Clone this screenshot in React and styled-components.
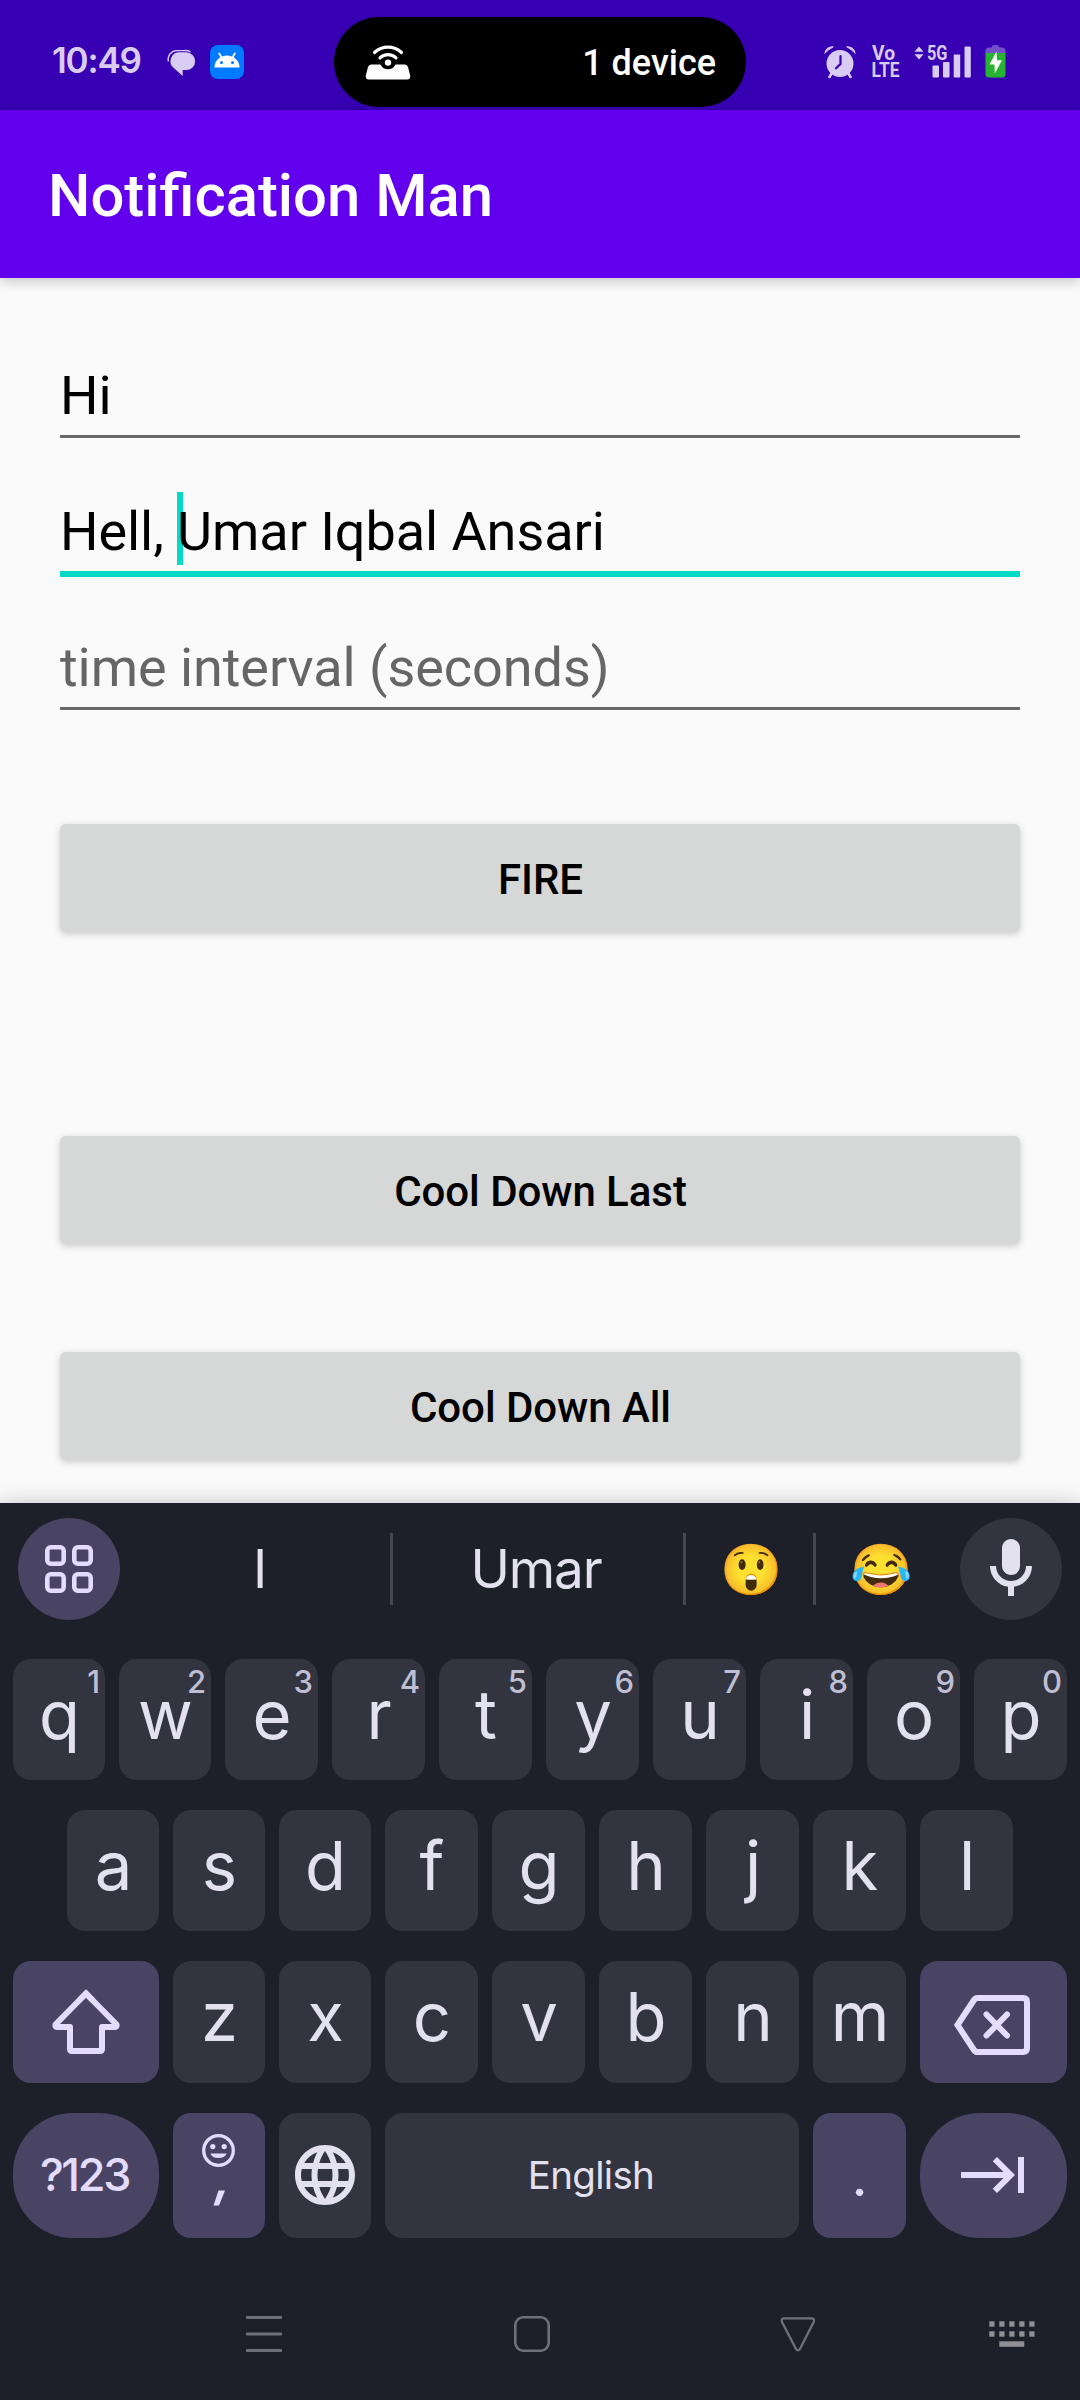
import React from 'react';
import styled, { createGlobalStyle } from 'styled-components';

const GlobalStyle = createGlobalStyle`
  *, *::before, *::after { box-sizing: border-box; }
  body { margin: 0; background: #fafafa; }
  svg { display: block; flex: none; overflow: visible; }
`;

const Screen = styled.div`
  width: 1080px;
  height: 2400px;
  display: flex;
  flex-direction: column;
  overflow: hidden;
  background: #fafafa;
  font-family: Roboto, 'Liberation Sans', sans-serif;
`;

/* ---------- status bar ---------- */

const StatusBar = styled.header`
  height: 110px;
  flex: none;
  display: grid;
  grid-template-columns: 334px 412px 334px;
  background: #3700b3;
`;

const StatusLeft = styled.div`
  display: flex;
  align-items: flex-start;
  padding: 45px 0 0 52px;
`;

const Clock = styled.span`
  width: 115px;
  margin-top: -5px;
  font: 600 35px/40px Inter, Roboto, sans-serif;
  letter-spacing: -1.2px;
  color: #d9ccf3;
`;

const AppBadge = styled.span`
  display: flex;
  align-items: center;
  justify-content: center;
  width: 34px;
  height: 34px;
  margin-left: 15px;
  padding-bottom: 2px;
  border-radius: 8px;
  background: #007bff;
`;

const Island = styled.div`
  display: flex;
  align-items: center;
  justify-content: space-between;
  height: 90px;
  margin-top: 17px;
  padding: 0 30px 0 31px;
  border-radius: 45px;
  background: #000;
  color: #fff;
  font-size: 36px;
  font-weight: 500;
`;

const IslandText = styled.span`
  padding-top: 1px;
`;

const StatusRight = styled.div`
  display: flex;
  align-items: flex-start;
  padding: 45px 0 0 78px;
  color: #d9ccf3;
`;

/* ---------- app ---------- */

const AppBar = styled.div`
  height: 168px;
  flex: none;
  display: flex;
  align-items: center;
  padding: 4px 48px 0;
  background: #6200ee;
  box-shadow: 0 3px 12px rgba(0, 0, 0, 0.22);
  color: #fff;
  font-size: 59.8px;
  font-weight: 500;
  z-index: 1;
`;

const Form = styled.main`
  height: 1225px;
  flex: none;
  display: flex;
  flex-direction: column;
  padding: 77px 60px 0;
`;

const Field = styled.div`
  position: relative;
  height: ${(p) => (p.$active ? 139 : 136)}px;
  margin-bottom: ${(p) => (p.$active ? -3 : 0)}px;
  padding-top: 26px;
  border-bottom: ${(p) => (p.$active ? '6px solid #03dac5' : '3px solid #686868')};
  margin-top: ${(p) => (p.$first ? -53 : 0)}px;
  color: ${(p) => (p.$hint ? '#666' : '#000')};
  font-size: 54px;
  line-height: 136px;
  letter-spacing: -0.06px;
  white-space: pre;
`;

const Caret = styled.span`
  position: absolute;
  left: 117px;
  bottom: 6px;
  width: 6px;
  height: 73px;
  background: #03dac5;
`;

const FieldText = styled.span`
  position: relative;
`;

const Action = styled.button`
  height: 108px;
  flex: none;
  margin-top: ${(p) => p.$gap}px;
  padding: 2px 0 0 1px;
  border: 0;
  border-radius: 6px;
  background: #d6d7d7;
  box-shadow: 0 2px 7px rgba(0, 0, 0, 0.2);
  font: 500 42px Roboto, sans-serif;
  letter-spacing: -0.05px;
  color: #000;
`;

/* ---------- keyboard ---------- */

const Keyboard = styled.section`
  flex: 1;
  display: flex;
  flex-direction: column;
  background: #1e2029;
  box-shadow: 0 -2px 18px rgba(0, 0, 0, 0.18);
  font-family: Inter, Roboto, sans-serif;
  color: #e3e1ef;
  z-index: 1;
`;

const Suggestions = styled.div`
  display: flex;
  align-items: center;
  height: 102px;
  margin: 15px 18px 39px;
`;

const RoundButton = styled.button`
  display: flex;
  align-items: center;
  justify-content: center;
  width: 102px;
  height: 102px;
  padding: 0;
  border: 0;
  border-radius: 50%;
  background: ${(p) => (p.$accent ? '#494364' : '#32343f')};
  color: ${(p) => (p.$accent ? '#e4dcff' : '#e3e1ef')};
`;

const Suggestion = styled.div`
  display: flex;
  align-items: center;
  justify-content: center;
  width: ${(p) => p.$w}px;
  height: 72px;
  border-right: ${(p) => (p.$last ? '0' : '3px solid #464753')};
  padding: ${(p) => p.$pad || '0'};
  font-size: 53px;
  letter-spacing: -1.2px;
`;

const Emoji = styled.span`
  font: 50px/60px 'Noto Color Emoji', sans-serif;
  letter-spacing: 0;
`;

const KeyRow = styled.div`
  display: flex;
  gap: 14px;
  height: ${(p) => p.$h}px;
  margin: 0 ${(p) => p.$inset}px ${(p) => p.$after}px;
`;

const Key = styled.button`
  position: relative;
  display: flex;
  flex-direction: column;
  align-items: center;
  justify-content: ${(p) => (p.$center ? 'center' : 'flex-start')};
  flex: ${(p) => (p.$w ? `0 0 ${p.$w}px` : '1 1 0')};
  min-width: 0;
  height: 100%;
  padding: ${(p) => p.$pad || '0'};
  border: 0;
  border-radius: ${(p) => (p.$pill ? 60 : 18)}px;
  background: ${(p) => (p.$accent ? '#494364' : '#32343f')};
  color: ${(p) => (p.$accent ? '#e4dcff' : '#e3e1ef')};
  font-family: inherit;
`;

const Letter = styled.span`
  padding-left: 1px;
  font-size: 67px;
  line-height: 111px;
`;

const Hint = styled.span`
  position: absolute;
  top: 6px;
  right: 5px;
  font-size: 31px;
  font-weight: 500;
  line-height: 34px;
  color: #bfbfd3;
`;

const SymbolLabel = styled.span`
  font-size: 45px;
  font-weight: 500;
  line-height: 50px;
  letter-spacing: -2.3px;
`;

const SpaceLabel = styled.span`
  font-size: 38.5px;
  line-height: 50px;
  letter-spacing: -0.7px;
`;

const Dot = styled.span`
  font-size: 56px;
  line-height: 50px;
  margin-top: 38px;
`;

const EmojiKeyFace = styled.span`
  display: flex;
  flex-direction: column;
  align-items: center;
  gap: 23px;
  padding-top: 21px;
`;

const NavBar = styled.nav`
  display: flex;
  align-items: center;
  height: 36px;
  margin-top: 78px;
  padding: 0 45px 0 246px;
  color: #707178;
`;

const Slot = styled.span`
  display: flex;
  width: ${(p) => p.$w}px;
`;

/* ---------- icons ---------- */

const ChatIcon = () => (
  <svg width="28" height="34" viewBox="0 0 28 34" fill="#d9ccf3">
    <path d="M11.500 7.300H19.300a8.850 8.850 0 0 1 0 17.700H15.700V31L6.500 22.800A8.900 8.900 0 0 1 11.500 7.300z" />
    <path d="M1.400 16.500A8.800 8.800 0 0 1 10.500 5.600H17a10 10 0 0 1 6.500 1.200" fill="none" stroke="#d9ccf3" strokeWidth="1.400" />
  </svg>
);

const AndroidIcon = () => (
  <svg width="26" height="18" viewBox="0 0 26 18">
    <path d="M0.500 15.500a12.500 12 0 0 1 25 0z" fill="#fff" />
    <path d="M5.200 1.500L8 6M20.800 1.500L18 6" stroke="#fff" strokeWidth="1.800" strokeLinecap="round" />
    <circle cx="7.500" cy="10.600" r="1.500" fill="#007bff" />
    <circle cx="18.500" cy="10.600" r="1.500" fill="#007bff" />
  </svg>
);

const RouterIcon = () => (
  <svg width="46" height="36" viewBox="0 0 46 36">
    <path d="M6 20.500h9.500a8.300 8.300 0 0 0 15 0H40q2.200 0 3 2.500l2.200 8.500q.5 4-3.200 4H4q-3.700 0-3.200-4L3 23Q3.800 20.500 6 20.500z" fill="#fff" />
    <circle cx="23" cy="18.600" r="3.200" fill="#fff" />
    <path d="M9.500 8.500a19.500 19.500 0 0 1 27 0M15 13.800a11.600 11.600 0 0 1 16 0" fill="none" stroke="#fff" strokeWidth="3.200" strokeLinecap="round" />
  </svg>
);

const AlarmIcon = () => (
  <svg width="32" height="34" viewBox="0 0 32 34">
    <circle cx="16" cy="18.500" r="13.500" fill="currentColor" />
    <path d="M7.500 28.500L5.500 32M24.500 28.500l2 3.500" stroke="currentColor" strokeWidth="2.600" strokeLinecap="round" />
    <path d="M.8 8.300Q2 1.500 9.300 1.800Q4.500 4.300.8 8.300zM31.200 8.300Q30 1.500 22.700 1.800Q27.500 4.300 31.200 8.300z" fill="currentColor" stroke="currentColor" strokeLinejoin="round" />
    <path d="M16.500 11v8l-4.500 4.300" fill="none" stroke="#3700b3" strokeWidth="2.200" strokeLinecap="round" />
  </svg>
);

const VolteIcon = () => (
  <svg width="28" height="34" viewBox="0 0 28 34" fill="currentColor" fontFamily="Roboto, sans-serif" fontWeight="700" fontSize="19.500">
    <text x="0" y="15.200" textLength="23" lengthAdjust="spacingAndGlyphs">Vo</text>
    <text x="-.5" y="32.200" textLength="28" lengthAdjust="spacingAndGlyphs">LTE</text>
  </svg>
);

const SignalIcon = () => (
  <svg width="58" height="34" viewBox="0 0 58 34" fill="currentColor">
    <path d="M.5 6.700L5 1.500l4.500 5.200zM.5 9.300h9L5 14.500z" />
    <text x="13" y="14.800" textLength="20.500" lengthAdjust="spacingAndGlyphs" fontFamily="Roboto, sans-serif" fontWeight="700" fontSize="20">5G</text>
    <rect x="18.500" y="20.500" width="6.500" height="12" rx="1" />
    <rect x="29" y="17" width="6.500" height="15.500" rx="1" />
    <rect x="39.700" y="9.500" width="6.500" height="23" rx="1" />
    <rect x="50.500" y="1.500" width="6.300" height="31" rx="1" />
  </svg>
);

const BatteryIcon = () => (
  <svg width="21" height="34" viewBox="0 0 21 34">
    <path d="M4 2.500h2.500Q7 0 9 0h3q2 0 2.500 2.500H17q3.500 0 3.500 3.500v3H.5V6Q.5 2.500 4 2.500z" fill="#734fca" />
    <path d="M.5 8h20v21q0 3.500-3.500 3.500H4Q.5 32.500.5 29z" fill="#28b332" />
    <path d="M11.500 6.500L4.500 19.500h5L9.800 28.500 17 15.200h-5z" fill="#fff" />
  </svg>
);

const GridIcon = () => (
  <svg width="48" height="48" viewBox="0 0 48 48" fill="none" stroke="currentColor" strokeWidth="4.600">
    {[2.3, 29.3].map((y) => [2.3, 29.3].map((x) => (
      <rect key={`${x}-${y}`} x={x} y={y} width="16.400" height="16.400" rx="3.500" />
    )))}
  </svg>
);

const MicIcon = () => (
  <svg width="72" height="72" viewBox="0 0 24 24" fill="currentColor">
    <path d="M12 14c1.660 0 3-1.340 3-3V5c0-1.660-1.340-3-3-3S9 3.340 9 5v6c0 1.660 1.340 3 3 3z" />
    <path d="M17 11c0 2.760-2.240 5-5 5s-5-2.240-5-5H5c0 3.530 2.610 6.430 6 6.920V21h2v-3.080c3.390-.49 6-3.390 6-6.920h-2z" />
  </svg>
);

const ShiftIcon = () => (
  <svg width="70" height="66" viewBox="0 0 70 66" fill="none" stroke="currentColor" strokeWidth="6">
    <path d="M35 4.500L4.500 35.500Q4 38 6 38H19V60q0 2 2 2H49q2 0 2-2V38H64q2 0 1.500-2.500z" strokeLinejoin="round" />
    <path d="M28 11.500l7-7 7 7" />
  </svg>
);

const BackspaceIcon = () => (
  <svg width="76" height="60" viewBox="0 0 76 60" fill="none" stroke="currentColor" strokeWidth="6">
    <path d="M3.500 30L20 5q1.300-2 3.500-2H69q4 0 4 4V53q0 4-4 4H23.500Q21.300 57 20 55z" />
    <path d="M32.500 19.500L53 40.500M53 19.500L32.500 40.500" strokeLinecap="round" />
  </svg>
);

const SmileIcon = () => (
  <svg width="33" height="33" viewBox="0 0 33 33" fill="currentColor">
    <circle cx="16.500" cy="16.500" r="14.800" fill="none" stroke="currentColor" strokeWidth="3.300" />
    <circle cx="10.800" cy="12.600" r="2.600" />
    <circle cx="22.200" cy="12.600" r="2.600" />
    <path d="M8.300 19.500h16.400a8.600 6.500 0 0 1-16.400 0z" />
  </svg>
);

const CommaIcon = () => (
  <svg width="12" height="16" viewBox="0 0 12 16" fill="currentColor">
    <path d="M5.500 0.500H12L6 15.500H.5z" />
  </svg>
);

const GlobeIcon = () => (
  <svg width="72" height="72" viewBox="0 0 24 24" fill="currentColor">
    <path d="M11.990 2C6.470 2 2 6.480 2 12s4.470 10 9.990 10C17.520 22 22 17.520 22 12S17.520 2 11.990 2zm6.930 6h-2.950c-.32-1.250-.78-2.450-1.380-3.560 1.840.63 3.370 1.910 4.330 3.560zM12 4.040c.83 1.200 1.480 2.530 1.910 3.960h-3.820c.43-1.430 1.080-2.760 1.910-3.960zM4.260 14C4.100 13.360 4 12.690 4 12s.1-1.360.26-2h3.380c-.08.66-.14 1.320-.14 2s.06 1.340.14 2H4.260zm.82 2h2.950c.32 1.250.78 2.450 1.380 3.560-1.840-.63-3.370-1.900-4.330-3.560zm2.950-8H5.080c.96-1.660 2.490-2.930 4.330-3.560C8.810 5.550 8.350 6.750 8.030 8zM12 19.960c-.83-1.200-1.480-2.530-1.910-3.960h3.820c-.43 1.430-1.080 2.760-1.910 3.960zM14.340 14H9.660c-.09-.66-.16-1.320-.16-2s.07-1.350.16-2h4.680c.09.65.16 1.320.16 2s-.07 1.340-.16 2zm.25 5.560c.6-1.110 1.060-2.310 1.380-3.560h2.950c-.96 1.650-2.490 2.930-4.330 3.560zM16.360 14c.08-.66.14-1.320.14-2s-.06-1.340-.14-2h3.380c.16.64.26 1.310.26 2s-.1 1.360-.26 2h-3.380z" />
  </svg>
);

const NextIcon = () => (
  <svg width="72" height="72" viewBox="0 0 24 24" fill="currentColor">
    <path d="M11.590 7.410L15.170 11H1v2h14.170l-3.590 3.590L13 18l6-6-6-6-1.410 1.410zM20 6v12h2V6h-2z" />
  </svg>
);

const MenuIcon = () => (
  <svg width="36" height="36" viewBox="0 0 36 36" fill="currentColor">
    <rect y="0" width="36" height="3" rx="1" />
    <rect y="16.500" width="36" height="3" rx="1" />
    <rect y="33" width="36" height="3" rx="1" />
  </svg>
);

const HomeIcon = () => (
  <svg width="36" height="36" viewBox="0 0 36 36" fill="none" stroke="currentColor" strokeWidth="2.600">
    <rect x="1.300" y="1.300" width="33.400" height="33.400" rx="8" />
  </svg>
);

const BackIcon = () => (
  <svg width="36" height="36" viewBox="0 0 36 36" fill="none" stroke="currentColor" strokeWidth="2.300">
    <path d="M4 2.300H31.500q3.300.3 2.300 3.400L20 33q-2 2.600-4 0L1.900 5.700Q1 2.600 4 2.300z" />
  </svg>
);

const KeyboardIcon = () => (
  <svg width="46" height="26" viewBox="0 0 46 26" fill="#8f8f94">
    {[0, 10].map((y) => [0, 10, 20, 30, 40].map((x) => (
      <rect key={`${x}-${y}`} x={x + 0.3} y={y + 0.3} width="5.200" height="5.400" />
    )))}
    <rect x="10.300" y="20.300" width="25" height="5.500" />
  </svg>
);

/* ---------- content ---------- */

const TOP_KEYS = 'qwertyuiop'.split('').map((letter, i) => ({ letter, digit: (i + 1) % 10 }));
const HOME_KEYS = 'asdfghjkl'.split('');
const BOTTOM_KEYS = 'zxcvbnm'.split('');

export default function App() {
  return (
    <Screen>
      <GlobalStyle />
      <StatusBar>
        <StatusLeft>
          <Clock>10:49</Clock>
          <ChatIcon />
          <AppBadge><AndroidIcon /></AppBadge>
        </StatusLeft>
        <Island>
          <RouterIcon />
          <IslandText>1 device</IslandText>
        </Island>
        <StatusRight>
          <AlarmIcon />
          <Slot $w={16} />
          <VolteIcon />
          <Slot $w={14} />
          <SignalIcon />
          <Slot $w={13} />
          <BatteryIcon />
        </StatusRight>
      </StatusBar>

      <AppBar>Notification Man</AppBar>

      <Form>
        <Field $first>Hi</Field>
        <Field $active>
          <Caret />
          <FieldText>Hell, Umar Iqbal Ansari</FieldText>
        </Field>
        <Field $hint>time interval (seconds)</Field>
        <Action $gap={114}>FIRE</Action>
        <Action $gap={204}>Cool Down Last</Action>
        <Action $gap={108}>Cool Down All</Action>
      </Form>

      <Keyboard>
        <Suggestions>
          <RoundButton $accent><GridIcon /></RoundButton>
          <Suggestion $w={273} $pad="0 0 0 9px">I</Suggestion>
          <Suggestion $w={293} $pad="0 4px 0 0">Umar</Suggestion>
          <Suggestion $w={130} $pad="1px 0 0 4px"><Emoji>😲</Emoji></Suggestion>
          <Suggestion $w={144} $last $pad="1px 12px 0 0"><Emoji>😂</Emoji></Suggestion>
          <RoundButton><MicIcon /></RoundButton>
        </Suggestions>

        <KeyRow $h={121} $inset={13} $after={30}>
          {TOP_KEYS.map(({ letter, digit }, i) => (
            <Key key={letter} $w={i < 2 ? 92 : 93}>
              <Letter>{letter}</Letter>
              <Hint>{digit}</Hint>
            </Key>
          ))}
        </KeyRow>
        <KeyRow $h={121} $inset={67} $after={30}>
          {HOME_KEYS.map((letter, i) => (
            <Key key={letter} $w={i < 3 ? 92 : 93}><Letter>{letter}</Letter></Key>
          ))}
        </KeyRow>
        <KeyRow $h={122} $inset={13} $after={30}>
          <Key $accent $center $w={146}><ShiftIcon /></Key>
          {BOTTOM_KEYS.map((letter, i) => (
            <Key key={letter} $w={i < 2 ? 92 : 93}><Letter>{letter}</Letter></Key>
          ))}
          <Key $accent $center $w={147} $pad="6px 3px 0 0"><BackspaceIcon /></Key>
        </KeyRow>
        <KeyRow $h={125} $inset={13} $after={0}>
          <Key $accent $pill $center $w={146} $pad="0 3px 1px 0"><SymbolLabel>?123</SymbolLabel></Key>
          <Key $accent $w={92} $pad="0 1px 0 0">
            <EmojiKeyFace><SmileIcon /><CommaIcon /></EmojiKeyFace>
          </Key>
          <Key $center $w={92} $pad="0 0 1px"><GlobeIcon /></Key>
          <Key $center $pad="0 2px 1px 0"><SpaceLabel>English</SpaceLabel></Key>
          <Key $accent $w={93}><Dot>.</Dot></Key>
          <Key $accent $pill $center $w={147} $pad="0 0 1px"><NextIcon /></Key>
        </KeyRow>

        <NavBar>
          <Slot $w={268}><MenuIcon /></Slot>
          <Slot $w={266}><HomeIcon /></Slot>
          <Slot $w={209}><BackIcon /></Slot>
          <KeyboardIcon />
        </NavBar>
      </Keyboard>
    </Screen>
  );
}
